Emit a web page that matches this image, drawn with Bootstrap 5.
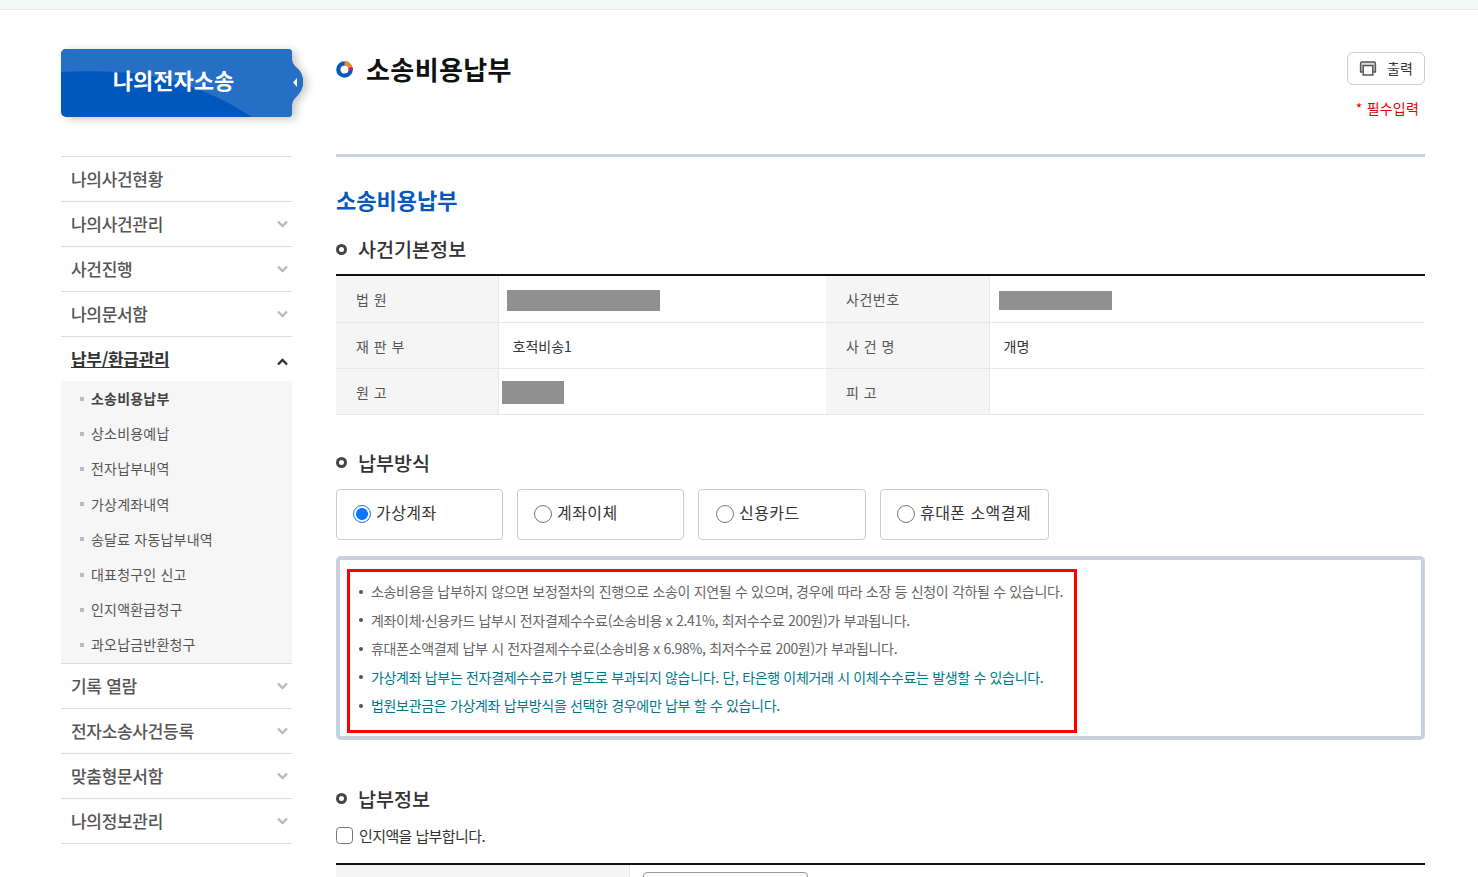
<!DOCTYPE html>
<html lang="ko">
<head>
<meta charset="utf-8">
<title>소송비용납부</title>
<link href="https://cdn.jsdelivr.net/npm/bootstrap@5.3.0/dist/css/bootstrap.min.css" rel="stylesheet">
<style>
html,body{height:877px;overflow:hidden}
body{font-family:"Noto Sans CJK KR","Noto Sans",sans-serif;color:#333;background:#fff;font-size:14px}
.topstrip{height:10px;background:#f5f6f6;border-bottom:1px solid #e6e8e8}
.shell{padding:39px 53px 0 61px;gap:44px}
.side{width:231px;flex:none}
.logo-box{height:68px;margin-bottom:39px}
.logo-art{position:absolute;left:0;top:0;overflow:visible}
.logo-text{position:relative;font-size:22px;font-weight:700;color:#fff;width:225px;height:60px;line-height:60px;text-align:center}
.snav{border-top:1px solid #dcdcdc}
.snav-item{height:45px;border-bottom:1px solid #dcdcdc;padding:0 4px 0 10px;font-size:17px;font-weight:500;color:#555;letter-spacing:-.3px}
.snav-item.open{border-bottom:0;color:#333;text-decoration:underline;font-weight:700;height:44px}
.snav-item.open svg{margin-top:5px}
.subnav{background:#f6f6f6;border-bottom:1px solid #dcdcdc;height:283px;padding:0 0 2px}
.sub-item{height:35.2px;padding-left:19px;font-size:14px;color:#555;gap:7px;letter-spacing:.2px}
.sub-item.on{font-weight:700;color:#444}
.sq{width:4px;height:4px;background:#bbb;flex:none}
.main{width:1089px;flex:none}
.title-row{border-bottom:3px solid #c9d1de;height:108px}
.title-txt{font-size:26px;font-weight:700;color:#111;line-height:40px;gap:13px;letter-spacing:.4px}
.print-btn{width:78px;height:33px;margin-top:3px;border:1px solid #ccc;border-radius:6px;background:#fff;font-size:14px;color:#333;padding:0;gap:10px}
.req{color:#d00;font-size:14px;line-height:20px;margin-top:13px;margin-right:6px;letter-spacing:.2px}
.h-blue{font-size:22px;font-weight:700;color:#0559bc;line-height:32px;margin:26px 0 0}
.h-sec{font-size:19.6px;font-weight:500;color:#333;line-height:28px;gap:11px;margin:0}
.dot{width:11px;height:11px;border:3px solid #444;border-radius:50%;flex:none}
.mt-sec1{margin-top:20px}
.info{width:100%;border-top:2px solid #111;margin-top:11px;table-layout:fixed;border-collapse:collapse}
.info th{background:#f4f5f4;font-weight:400;color:#555;font-size:14px;padding:2px 0 0 20px;border-bottom:1px solid #e8e8e8;border-right:1px solid #e8e8e8;letter-spacing:.5px}
.info td{font-size:14px;color:#333;border-bottom:1px solid #e8e8e8;padding:2px 0 0 14px}
.info tr{height:46px}
.info tr:first-child{height:47px}
.col-th-a{width:162px}
.col-th-b{width:163px}
.col-td{width:328px}
.blk{display:block;background:#909090}
.redact-a{width:153px;height:21px;margin-top:2px}
.redact-b{width:113px;height:19px;margin:1px 0 0 1px}
.redact-c{width:62px;height:23px;margin-left:-1px}
.pay-row{gap:14px;margin-top:12px}
.pay-opt{height:51px;border:1px solid #ccc;border-radius:4px;padding-left:16px;font-size:16px;gap:5px;color:#333;margin:0;letter-spacing:.45px}
.pay-opt span{margin-bottom:4px}
.pay-opt .form-check-input{width:18px;height:18px;margin:0;flex:none;border-color:#777}
.pay-opt .form-check-input:checked{background-color:#fff;background-image:radial-gradient(circle,#0a77ff 0,#0a77ff 5.6px,#fff 6.2px);border-color:#0a77ff;border-width:1.5px}
.notebox{border:4px solid #c9d1de;border-radius:5px;height:184px;margin-top:16px;padding:9px 7px}
.noteinner{width:730px;height:164px;border:3px solid #f00;padding:6px 0 0 9px}
.note-li{height:28.5px;font-size:14px;color:#666;letter-spacing:-.33px;gap:8px;white-space:nowrap}
.note-li.teal{color:#00798c}
.bul{width:4px;height:4px;border-radius:50%;background:#555;flex:none}
.chk{gap:6px;font-size:15px;letter-spacing:-.6px;margin-top:12px;color:#333}
.chk input{width:17px;height:17px;margin:0;border-color:#777;flex:none;border-radius:3px}
.bottom-tb{border-top:2px solid #111;margin-top:16px;height:40px}
.bottom-th{width:294px;background:#f4f5f4;border-right:1px solid #e8e8e8;flex:none}
.bottom-field{width:165px;height:30px;border:1px solid #999;border-radius:4px;margin:7px 0 0 13px}
.sec-pay{margin-top:34px}
.sec-info{margin-top:45px}
.w1{width:167px}.w2{width:168px;padding-left:17px}.w3{width:169px}
</style>
</head>
<body>
<div class="topstrip"></div>
<div class="shell d-flex align-items-start">
  <aside class="side">
    <div class="logo-box position-relative">
      <svg class="logo-art" width="245" height="68" viewBox="0 0 245 68">
        <defs>
          <filter id="sh" x="-5%" y="-10%" width="115%" height="125%"><feDropShadow dx="4" dy="2" stdDeviation="4" flood-color="#000" flood-opacity=".22"/></filter>
          <clipPath id="cl"><path d="M5 0H227a4 4 0 0 1 4 4V10C231 15 234 17 237 20C241 24 242 29 242 33C242 38 240 43 236 47C233 50 231 52 231 56V64a4 4 0 0 1-4 4H5a5 5 0 0 1-5-5V5a5 5 0 0 1 5-5Z"/></clipPath>
        </defs>
        <path d="M5 0H227a4 4 0 0 1 4 4V10C231 15 234 17 237 20C241 24 242 29 242 33C242 38 240 43 236 47C233 50 231 52 231 56V64a4 4 0 0 1-4 4H5a5 5 0 0 1-5-5V5a5 5 0 0 1 5-5Z" fill="#0559bc" filter="url(#sh)"/>
        <path clip-path="url(#cl)" d="M0 0H245V68H191C165 52 130 31 70 24C45 22 20 22 0 23Z" fill="#256fc4"/>
        <path d="M236 29L232 33.5L236 38Z" fill="#fff"/>
      </svg>
      <div class="logo-text">나의전자소송</div>
    </div>
    <nav class="snav">
      <div class="snav-item d-flex align-items-center">나의사건현황</div>
      <div class="snav-item d-flex align-items-center justify-content-between">나의사건관리<svg width="11" height="8" viewBox="0 0 11 8"><path d="M1 1.5L5.5 6L10 1.5" fill="none" stroke="#bbb" stroke-width="2.4"/></svg></div>
      <div class="snav-item d-flex align-items-center justify-content-between">사건진행<svg width="11" height="8" viewBox="0 0 11 8"><path d="M1 1.5L5.5 6L10 1.5" fill="none" stroke="#bbb" stroke-width="2.4"/></svg></div>
      <div class="snav-item d-flex align-items-center justify-content-between">나의문서함<svg width="11" height="8" viewBox="0 0 11 8"><path d="M1 1.5L5.5 6L10 1.5" fill="none" stroke="#bbb" stroke-width="2.4"/></svg></div>
      <div class="snav-item open d-flex align-items-center justify-content-between">납부/환급관리<svg width="11" height="8" viewBox="0 0 11 8"><path d="M1 6.5L5.5 2L10 6.5" fill="none" stroke="#333" stroke-width="2.4"/></svg></div>
      <div class="subnav">
        <div class="sub-item on d-flex align-items-center"><i class="sq"></i>소송비용납부</div>
        <div class="sub-item d-flex align-items-center"><i class="sq"></i>상소비용예납</div>
        <div class="sub-item d-flex align-items-center"><i class="sq"></i>전자납부내역</div>
        <div class="sub-item d-flex align-items-center"><i class="sq"></i>가상계좌내역</div>
        <div class="sub-item d-flex align-items-center"><i class="sq"></i>송달료 자동납부내역</div>
        <div class="sub-item d-flex align-items-center"><i class="sq"></i>대표청구인 신고</div>
        <div class="sub-item d-flex align-items-center"><i class="sq"></i>인지액환급청구</div>
        <div class="sub-item d-flex align-items-center"><i class="sq"></i>과오납금반환청구</div>
      </div>
      <div class="snav-item d-flex align-items-center justify-content-between">기록 열람<svg width="11" height="8" viewBox="0 0 11 8"><path d="M1 1.5L5.5 6L10 1.5" fill="none" stroke="#bbb" stroke-width="2.4"/></svg></div>
      <div class="snav-item d-flex align-items-center justify-content-between">전자소송사건등록<svg width="11" height="8" viewBox="0 0 11 8"><path d="M1 1.5L5.5 6L10 1.5" fill="none" stroke="#bbb" stroke-width="2.4"/></svg></div>
      <div class="snav-item d-flex align-items-center justify-content-between">맞춤형문서함<svg width="11" height="8" viewBox="0 0 11 8"><path d="M1 1.5L5.5 6L10 1.5" fill="none" stroke="#bbb" stroke-width="2.4"/></svg></div>
      <div class="snav-item d-flex align-items-center justify-content-between">나의정보관리<svg width="11" height="8" viewBox="0 0 11 8"><path d="M1 1.5L5.5 6L10 1.5" fill="none" stroke="#bbb" stroke-width="2.4"/></svg></div>
    </nav>
  </aside>
  <main class="main">
    <div class="title-row d-flex justify-content-between align-items-start">
      <div class="title-txt d-flex align-items-center">
        <svg width="17" height="17" viewBox="0 0 17 17"><circle cx="8.5" cy="8.5" r="6.2" fill="none" stroke="#0559bc" stroke-width="4.2"/><path d="M8.5 2.3A6.2 6.2 0 0 1 14.4 6.6" fill="none" stroke="#f08a1d" stroke-width="4.2"/><path d="M14.4 6.6A6.2 6.2 0 0 1 14.6 9.6" fill="none" stroke="#d3127b" stroke-width="4.2"/></svg>
        <span>소송비용납부</span>
      </div>
      <div class="d-flex flex-column align-items-end">
        <button type="button" class="print-btn d-flex align-items-center justify-content-center">
          <svg width="18" height="15" viewBox="0 0 18 15"><path d="M3.5 11H1.6V2.4A1.4 1.4 0 0 1 3 1H15A1.4 1.4 0 0 1 16.4 2.4V11H14.5" fill="#d8d8d8" stroke="#555" stroke-width="1.5"/><rect x="4.2" y="4.6" width="9.6" height="9.4" fill="#fff" stroke="#555" stroke-width="1.5"/></svg>
          <span>출력</span>
        </button>
        <div class="req">* 필수입력</div>
      </div>
    </div>
    <h2 class="h-blue">소송비용납부</h2>
    <h3 class="h-sec mt-sec1 d-flex align-items-center"><i class="dot"></i>사건기본정보</h3>
    <table class="info">
      <colgroup><col class="col-th-a"><col class="col-td"><col class="col-th-b"><col></colgroup>
      <tbody>
        <tr><th>법 원</th><td class="ps-2"><span class="blk redact-a"></span></td><th>사건번호</th><td class="ps-2"><span class="blk redact-b"></span></td></tr>
        <tr><th>재 판 부</th><td>호적비송1</td><th>사 건 명</th><td>개명</td></tr>
        <tr><th>원 고</th><td class="ps-1"><span class="blk redact-c"></span></td><th>피 고</th><td></td></tr>
      </tbody>
    </table>
    <h3 class="h-sec d-flex align-items-center sec-pay"><i class="dot"></i>납부방식</h3>
    <div class="pay-row d-flex">
      <label class="pay-opt w1 d-flex align-items-center"><input class="form-check-input" type="radio" name="pay" checked><span>가상계좌</span></label>
      <label class="pay-opt w1 d-flex align-items-center"><input class="form-check-input" type="radio" name="pay"><span>계좌이체</span></label>
      <label class="pay-opt w2 d-flex align-items-center"><input class="form-check-input" type="radio" name="pay"><span>신용카드</span></label>
      <label class="pay-opt w3 d-flex align-items-center"><input class="form-check-input" type="radio" name="pay"><span>휴대폰 소액결제</span></label>
    </div>
    <div class="notebox">
      <div class="noteinner">
        <div class="note-li d-flex align-items-center"><i class="bul"></i>소송비용을 납부하지 않으면 보정절차의 진행으로 소송이 지연될 수 있으며, 경우에 따라 소장 등 신청이 각하될 수 있습니다.</div>
        <div class="note-li d-flex align-items-center"><i class="bul"></i>계좌이체·신용카드 납부시 전자결제수수료(소송비용 x 2.41%, 최저수수료 200원)가 부과됩니다.</div>
        <div class="note-li d-flex align-items-center"><i class="bul"></i>휴대폰소액결제 납부 시 전자결제수수료(소송비용 x 6.98%, 최저수수료 200원)가 부과됩니다.</div>
        <div class="note-li teal d-flex align-items-center"><i class="bul"></i>가상계좌 납부는 전자결제수수료가 별도로 부과되지 않습니다. 단, 타은행 이체거래 시 이체수수료는 발생할 수 있습니다.</div>
        <div class="note-li teal d-flex align-items-center"><i class="bul"></i>법원보관금은 가상계좌 납부방식을 선택한 경우에만 납부 할 수 있습니다.</div>
      </div>
    </div>
    <h3 class="h-sec d-flex align-items-center sec-info"><i class="dot"></i>납부정보</h3>
    <label class="chk d-flex align-items-center"><input class="form-check-input" type="checkbox">인지액을 납부합니다.</label>
    <div class="bottom-tb d-flex">
      <div class="bottom-th"></div>
      <div class="bottom-field"></div>
    </div>
  </main>
</div>
</body>
</html>
